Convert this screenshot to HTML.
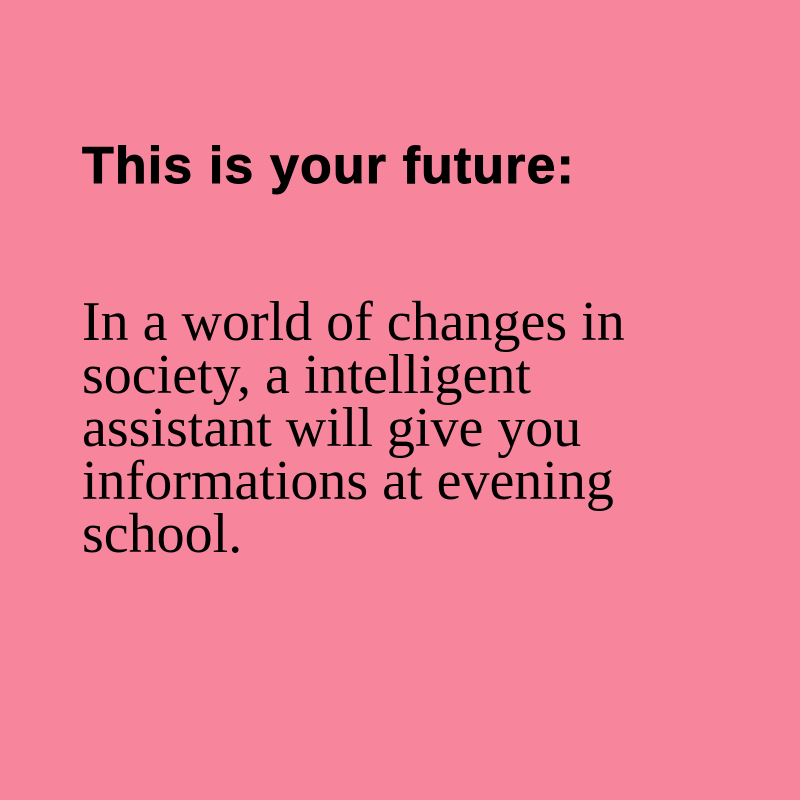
<!DOCTYPE html>
<html><head><style>
html,body{margin:0;padding:0;width:800px;height:800px;background:#f7869d;overflow:hidden}
.t{position:absolute;left:82px;top:140px;font:bold 52px/52px "Liberation Sans",sans-serif;color:#000;white-space:nowrap;letter-spacing:1.1px;-webkit-text-stroke:0.9px #000}
.b{position:absolute;left:82px;top:296px;font:56px/53px "Liberation Serif",serif;color:#000;white-space:nowrap}
</style></head><body>
<div class="t">This is your future:</div>
<div class="b">In a world of changes in<br>society, a intelligent<br>assistant will give you<br>informations at evening<br>school.</div>
</body></html>
